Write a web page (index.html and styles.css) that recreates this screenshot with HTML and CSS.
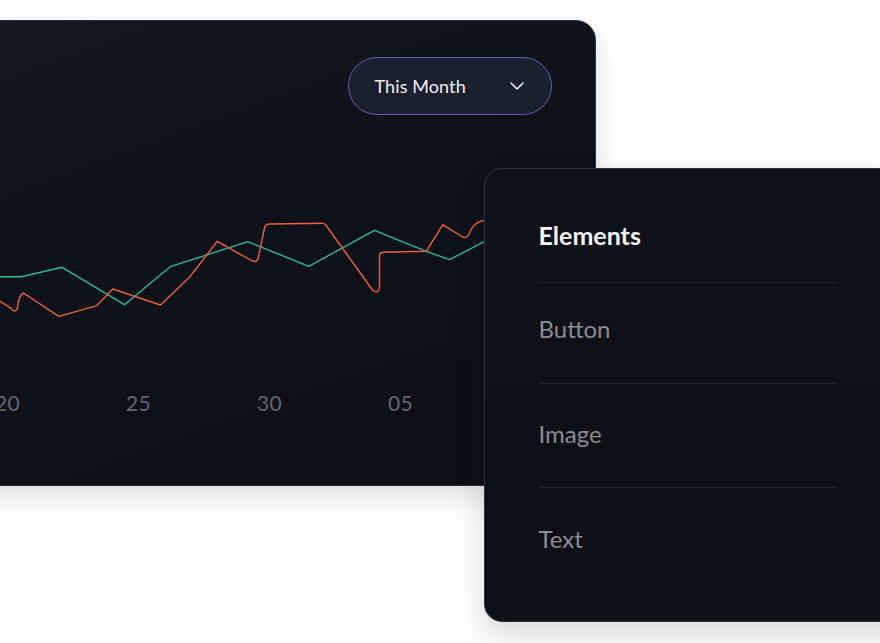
FILE: index.html
```html
<!DOCTYPE html>
<html lang="en">
<head>
<meta charset="utf-8">
<title>Chart and elements</title>
<link rel="stylesheet" href="styles.css">
</head>
<body>
<div class="stage">
  <section class="chart-card">
    <div class="card-head">
      <button class="select" type="button">
        <span class="select-label">This Month</span>
        <svg class="chevron" width="14" height="8" viewBox="0 0 14 8"><path d="M1 1 L7 7 L13 1" fill="none" stroke="#e8eaf0" stroke-width="1.6" stroke-linecap="round" stroke-linejoin="round"/></svg>
      </button>
    </div>
    <svg class="chart" width="620" height="140" viewBox="-22.5 200 620 140">
      <polyline fill="none" stroke="#2fb89a" stroke-width="1.4" stroke-linejoin="round" points="-30,277.7 21.7,277.7 62.7,268.3 125,305.7 170.7,267.7 248.3,242.7 309.3,267.3 375,231.3 426.7,252.3 450,260.7 483.3,243.3 520,226"/>
      <path fill="none" stroke="#e8623a" stroke-width="1.4" stroke-linejoin="round" stroke-linecap="round" d="M-30,282 L11,309 Q16,315 18,309 Q19,296 24,294 L59.3,317.3 L97.3,306.7 L113.3,290 L161,306 L190,278.3 L217.7,242.3 L251,261 Q258,265 259,258 L265,229 Q266,225 270,225 L323,224.3 Q325,224.3 327,227 L373,291 Q379,296 380,288 L380,257 Q380,253.3 384,253.3 L426.7,252.3 L443.3,225.7 L463,238 Q468,240 470,234 Q474,224 482,222 L520,215"/>
    </svg>
    <div class="axis">
      <span class="tick">20</span>
      <span class="tick">25</span>
      <span class="tick">30</span>
      <span class="tick">05</span>
    </div>
  </section>

  <aside class="menu">
    <ul class="menu-list">
      <li class="menu-head">Elements</li>
      <li class="menu-item">Button</li>
      <li class="menu-item">Image</li>
      <li class="menu-item last">Text</li>
    </ul>
  </aside>
</div>
</body>
</html>
```

FILE: styles.css
```css
* { box-sizing: border-box; }
html, body {
  margin: 0;
  padding: 0;
  background: #ffffff;
}
body {
  width: 880px;
  height: 643px;
  overflow: hidden;
  font-family: "Lato", "Noto Sans", sans-serif;
}
.stage {
  position: relative;
  width: 880px;
  height: 643px;
}
.chart-card {
  position: absolute;
  left: -24px;
  top: 20px;
  width: 620px;
  height: 466px;
  border: 1.5px solid #2b2f38;
  border-radius: 20px;
  background: linear-gradient(160deg, #131722 0%, #0e1119 45%, #0c0f16 100%);
  box-shadow: 0 10px 28px rgba(20, 24, 35, 0.14);
  overflow: hidden;
}
.card-head {
  display: flex;
  justify-content: flex-end;
  padding: 35.5px 43.5px 0 0;
}
.select {
  display: flex;
  align-items: center;
  justify-content: space-between;
  width: 204px;
  height: 58px;
  padding: 0 27px 0 26px;
  border: 1.2px solid #5564b4;
  border-radius: 29px;
  background: linear-gradient(180deg, #1b2030 0%, #1a1e2d 100%);
  color: #eef0f5;
  font-family: "Lato", "Noto Sans", sans-serif;
  font-size: 18px;
  cursor: pointer;
}
.select-label { letter-spacing: 0.1px; }
.chevron { display: block; margin-top: 1px; }
.chart {
  display: block;
  margin-top: 84.5px;
}
.axis {
  display: flex;
  margin-left: -35px;
  margin-top: 50px;
}
.tick {
  width: 131px;
  text-align: center;
  color: #5f6672;
  font-size: 21px;
  line-height: 28px;
  letter-spacing: 0.3px;
}
.menu {
  position: absolute;
  left: 484px;
  top: 168px;
  width: 430px;
  height: 454px;
  border: 1.5px solid #2e3139;
  border-radius: 18px;
  background: linear-gradient(180deg, #0e1118 0%, #0c0f16 100%);
  box-shadow: 0 12px 30px rgba(20, 24, 35, 0.18);
  padding-left: 53.5px;
}
.menu-list {
  list-style: none;
  margin: 0;
  padding: 0;
  width: 297px;
}
.menu-head {
  padding: 52px 0 33px;
  line-height: 28px;
  font-size: 25px;
  font-weight: 700;
  color: #f4f5f7;
  border-bottom: 1px solid #22262f;
}
.menu-item {
  padding: 32px 0 40px;
  line-height: 28px;
  font-size: 24px;
  color: #8a8c93;
  border-bottom: 1px solid #22262f;
}
.menu-item + .menu-item { padding-top: 36px; padding-bottom: 39px; }
.menu-item.last { padding-top: 37px; border-bottom: none; }
```
